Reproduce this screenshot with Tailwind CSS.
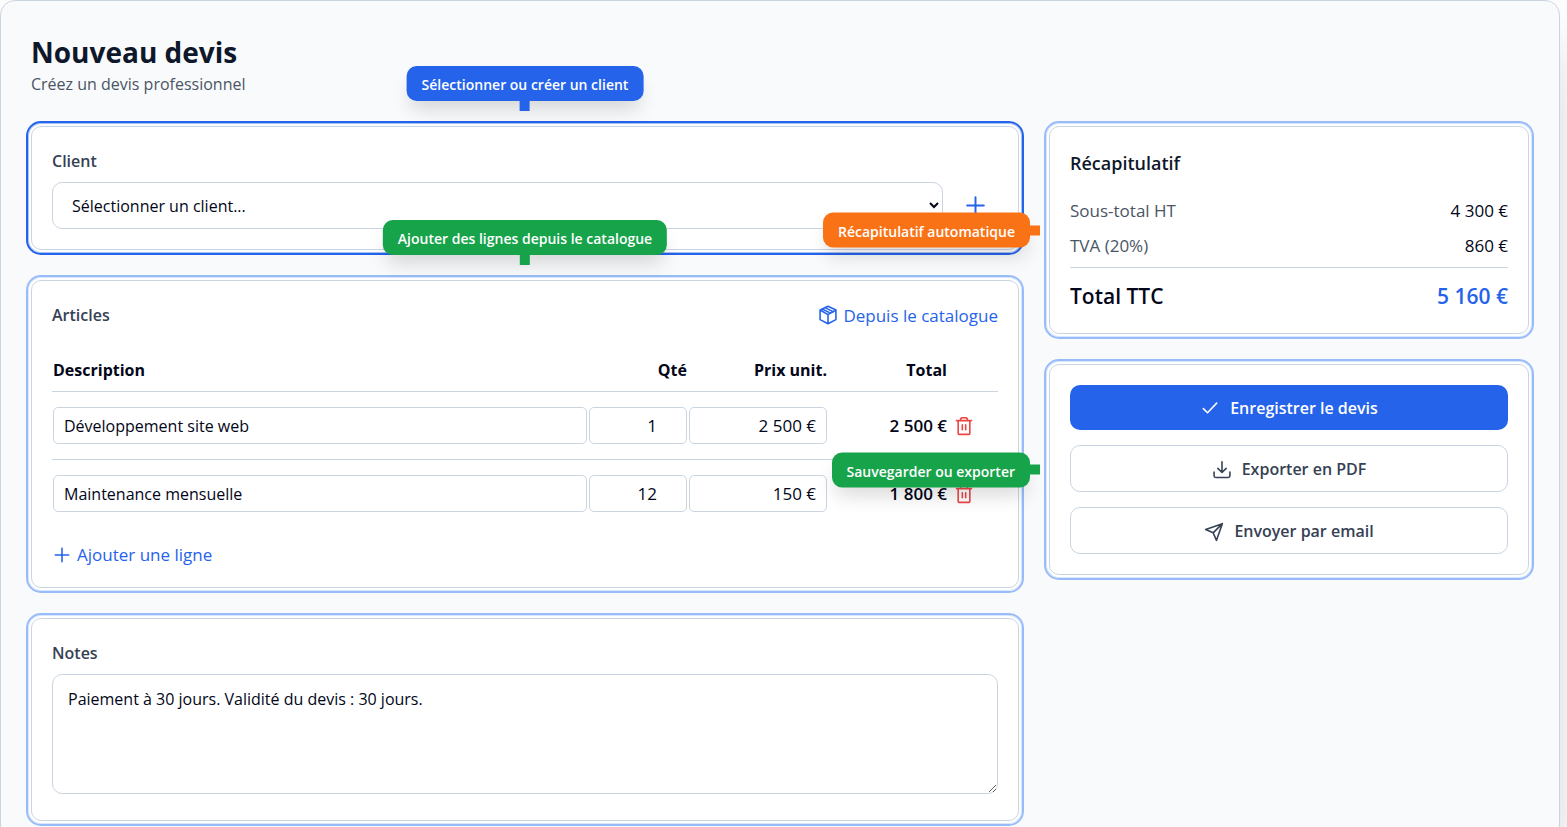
<!DOCTYPE html>
<html lang="fr">
<head>
  <meta charset="UTF-8" />
  <meta name="viewport" content="width=device-width, initial-scale=1.0" />
  <title>Nouveau devis</title>
  <script src="https://cdn.jsdelivr.net/npm/@tailwindcss/browser@4"></script>
</head>
<body class="bg-white overflow-x-hidden font-['Open_Sans',sans-serif] text-base leading-[25px] text-slate-950">
  <main class="mr-[7px] px-[25px] pt-[35px] pb-6 bg-[#f9fafc] border border-[#cbd5e1] rounded-[15px] shadow-[0_31px_62px_-15px_rgba(0,0,0,0.25)]">
    <!-- Header -->
    <header class="px-[5px] mb-6">
      <h1 class="text-[28px] leading-8 font-bold text-[#0f172a]">Nouveau devis</h1>
      <p class="mt-1 text-gray-600">Créez un devis professionnel</p>
    </header>

    <div class="grid grid-cols-[998fr_490fr] gap-5 items-start">
      <div class="flex flex-col gap-5">
        <!-- Client -->
        <section class="relative p-[3px] bg-white border-2 border-[#2563eb] rounded-[15px] shadow-[inset_0_0_0_1px_#a8c1f7]">
          <div class="p-5 border border-[#cbd5e1] rounded-[10px]">
            <label for="client" class="block mb-[7px] leading-7 font-semibold text-gray-700">Client</label>
            <div class="flex gap-[10px]">
              <select id="client" class="flex-1 h-[47px] px-[15px] bg-white border border-[#cbd5e1] rounded-[10px]">
                <option>Sélectionner un client...</option>
              </select>
              <button type="button" aria-label="Créer un client" class="p-[10px] text-[#2563eb]">
                <svg class="size-[25px]" viewBox="0 0 24 24" fill="none" stroke="currentColor" stroke-width="1.9" stroke-linecap="round" stroke-linejoin="round"><path d="M12 4v16M4 12h16" /></svg>
              </button>
            </div>
          </div>
          <div class="absolute z-10 bottom-full left-1/2 -translate-x-1/2 mb-[22px] px-[15px] pt-[6px] pb-1 bg-[#2563eb] text-white text-sm leading-[25px] font-semibold whitespace-nowrap rounded-[10px] shadow-[0_12px_19px_-4px_rgba(0,0,0,0.15)]">
            Sélectionner ou créer un client
            <span class="absolute top-full left-1/2 -translate-x-1/2 size-[10px] bg-[#2563eb]"></span>
          </div>
        </section>

        <!-- Articles -->
        <section class="relative p-[3px] bg-white border-2 border-[#98bcf9] rounded-[15px] shadow-[inset_0_0_0_1px_#d9e6fd]">
          <div class="p-5 border border-[#cbd5e1] rounded-[10px]">
            <div class="flex justify-between items-center mb-[19px]">
              <h2 class="leading-7 font-semibold text-gray-700">Articles</h2>
              <button type="button" class="flex items-center gap-[5px] text-[17px] text-[#2563eb]">
                <svg class="size-5" viewBox="0 0 24 24" fill="none" stroke="currentColor" stroke-width="1.9" stroke-linecap="round" stroke-linejoin="round"><path d="M12 1.5L21.5 6v11.500L12 22.500l-9.500-5V6zM2.500 6L12 11.500 21.500 6M12 11.500v11M5 4.800l10 5M8.500 3.200l10 5" /></svg>
                Depuis le catalogue
              </button>
            </div>
            <table class="w-full table-fixed border-collapse">
              <thead>
                <tr class="border-b border-[#cbd5e1] font-bold">
                  <th class="px-px pt-[10px] pb-2 text-left">Description</th>
                  <th class="w-[100px] px-px pt-[10px] pb-2 text-right">Qté</th>
                  <th class="w-[140px] px-px pt-[10px] pb-2 text-right">Prix unit.</th>
                  <th class="w-[120px] px-px pt-[10px] pb-2 text-right">Total</th>
                  <th class="w-[50px]"></th>
                </tr>
              </thead>
              <tbody>
                <tr class="border-b border-[#cbd5e1]">
                  <td class="px-px py-[15px]"><input type="text" aria-label="Description" value="Développement site web" class="block w-full h-[37px] px-[10px] border border-[#cbd5e1] rounded-[5px]" /></td>
                  <td class="px-px"><input type="number" aria-label="Quantité" value="1" class="block w-full h-[37px] px-[14px] text-[17px] text-right border border-[#cbd5e1] rounded-[5px]" /></td>
                  <td class="px-px"><input type="text" aria-label="Prix unitaire" value="2 500 €" class="block w-full h-[37px] px-[10px] text-[17px] text-right border border-[#cbd5e1] rounded-[5px]" /></td>
                  <td class="px-px text-[17px] text-right font-semibold">2 500 €</td>
                  <td class="px-px">
                    <button type="button" aria-label="Supprimer" class="block p-[5px] text-[#ef4444]">
                      <svg class="size-5" viewBox="0 0 24 24" fill="none" stroke="currentColor" stroke-width="1.9" stroke-linecap="round" stroke-linejoin="round"><path d="M3 5.5h18M19 5.5V21a1 1 0 0 1-1 1H6a1 1 0 0 1-1-1V5.500M8 5.500v-2L9.500 2h5L16 3.500v2M10 10.500v6M14 10.500v6" /></svg>
                    </button>
                  </td>
                </tr>
                <tr>
                  <td class="px-px py-[15px]"><input type="text" aria-label="Description" value="Maintenance mensuelle" class="block w-full h-[37px] px-[10px] border border-[#cbd5e1] rounded-[5px]" /></td>
                  <td class="px-px"><input type="number" aria-label="Quantité" value="12" class="block w-full h-[37px] px-[14px] text-[17px] text-right border border-[#cbd5e1] rounded-[5px]" /></td>
                  <td class="px-px"><input type="text" aria-label="Prix unitaire" value="150 €" class="block w-full h-[37px] px-[10px] text-[17px] text-right border border-[#cbd5e1] rounded-[5px]" /></td>
                  <td class="px-px text-[17px] text-right font-semibold">1 800 €</td>
                  <td class="px-px">
                    <button type="button" aria-label="Supprimer" class="block p-[5px] text-[#ef4444]">
                      <svg class="size-5" viewBox="0 0 24 24" fill="none" stroke="currentColor" stroke-width="1.9" stroke-linecap="round" stroke-linejoin="round"><path d="M3 5.5h18M19 5.5V21a1 1 0 0 1-1 1H6a1 1 0 0 1-1-1V5.500M8 5.500v-2L9.500 2h5L16 3.500v2M10 10.500v6M14 10.500v6" /></svg>
                    </button>
                  </td>
                </tr>
              </tbody>
            </table>
            <button type="button" class="flex items-center gap-[5px] mt-[15px] text-[17px] text-[#2563eb]">
              <svg class="size-5" viewBox="0 0 24 24" fill="none" stroke="currentColor" stroke-width="1.9" stroke-linecap="round" stroke-linejoin="round"><path d="M12 4v16M4 12h16" /></svg>
              Ajouter une ligne
            </button>
          </div>
          <div class="absolute z-10 bottom-full left-1/2 -translate-x-1/2 mb-[22px] px-[15px] pt-[6px] pb-1 bg-[#16a34a] text-white text-sm leading-[25px] font-semibold whitespace-nowrap rounded-[10px] shadow-[0_12px_19px_-4px_rgba(0,0,0,0.15)]">
            Ajouter des lignes depuis le catalogue
            <span class="absolute top-full left-1/2 -translate-x-1/2 size-[10px] bg-[#16a34a]"></span>
          </div>
        </section>

        <!-- Notes -->
        <section class="p-[3px] bg-white border-2 border-[#98bcf9] rounded-[15px] shadow-[inset_0_0_0_1px_#d9e6fd]">
          <div class="p-5 border border-[#cbd5e1] rounded-[10px]">
            <label for="notes" class="block mb-[7px] leading-7 font-semibold text-gray-700">Notes</label>
            <textarea id="notes" class="block w-full h-[120px] mb-1.5 px-[15px] py-3 border border-[#cbd5e1] rounded-[10px]">Paiement à 30 jours. Validité du devis : 30 jours.</textarea>
          </div>
        </section>
      </div>

      <div class="flex flex-col gap-5">
        <!-- Récapitulatif -->
        <section class="relative p-[3px] bg-white border-2 border-[#98bcf9] rounded-[15px] shadow-[inset_0_0_0_1px_#d9e6fd]">
          <div class="p-5 border border-[#cbd5e1] rounded-[10px]">
            <h2 class="mb-[19px] text-lg leading-8 font-semibold text-[#0f172a]">Récapitulatif</h2>
            <div class="flex justify-between mb-[10px] text-[17px]">
              <span class="text-gray-600">Sous-total HT</span>
              <span>4 300 €</span>
            </div>
            <div class="flex justify-between mb-[9px] text-[17px]">
              <span class="text-gray-600">TVA (20%)</span>
              <span>860 €</span>
            </div>
            <div class="flex justify-between pt-[11px] border-t border-[#cbd5e1] text-[21px] leading-[34px] font-semibold">
              <span>Total TTC</span>
              <span class="text-[#2563eb]">5 160 €</span>
            </div>
          </div>
          <div class="absolute z-10 right-full top-1/2 -translate-y-1/2 mr-4 px-[15px] pt-[6px] pb-1 bg-[#f97316] text-white text-sm leading-[25px] font-semibold whitespace-nowrap rounded-[10px] shadow-[0_12px_19px_-4px_rgba(0,0,0,0.15)]">
            Récapitulatif automatique
            <span class="absolute left-full top-1/2 -translate-y-1/2 size-[10px] bg-[#f97316]"></span>
          </div>
        </section>

        <!-- Actions -->
        <section class="relative p-[3px] bg-white border-2 border-[#98bcf9] rounded-[15px] shadow-[inset_0_0_0_1px_#d9e6fd]">
          <div class="flex flex-col gap-[15px] p-5 border border-[#cbd5e1] rounded-[10px] font-semibold">
            <button type="button" class="flex justify-center items-center gap-[10px] pt-[11px] pb-[9px] bg-[#2563eb] text-white rounded-[10px]">
              <svg class="size-5" viewBox="0 0 24 24" fill="none" stroke="currentColor" stroke-width="1.9" stroke-linecap="round" stroke-linejoin="round"><path d="M20 5L9 16.5l-5-5" /></svg>
              Enregistrer le devis
            </button>
            <button type="button" class="flex justify-center items-center gap-[10px] pt-[11px] pb-[9px] border border-[#cbd5e1] text-gray-700 rounded-[10px]">
              <svg class="size-5" viewBox="0 0 24 24" fill="none" stroke="currentColor" stroke-width="1.9" stroke-linecap="round" stroke-linejoin="round"><path d="M21.500 14.500V19a2 2 0 0 1-2 2h-15a2 2 0 0 1-2-2v-4.500M7 10l5 5 5-5M12 15V2" /></svg>
              Exporter en PDF
            </button>
            <button type="button" class="flex justify-center items-center gap-[10px] pt-[11px] pb-[9px] border border-[#cbd5e1] text-gray-700 rounded-[10px]">
              <svg class="size-5" viewBox="0 0 24 24" fill="none" stroke="currentColor" stroke-width="1.9" stroke-linecap="round" stroke-linejoin="round"><path d="M22 2L11 13M22 2l-7 20-4-9-9-4 20-7z" /></svg>
              Envoyer par email
            </button>
          </div>
          <div class="absolute z-10 right-full top-1/2 -translate-y-1/2 mr-4 px-[15px] pt-[6px] pb-1 bg-[#16a34a] text-white text-sm leading-[25px] font-semibold whitespace-nowrap rounded-[10px] shadow-[0_12px_19px_-4px_rgba(0,0,0,0.15)]">
            Sauvegarder ou exporter
            <span class="absolute left-full top-1/2 -translate-y-1/2 size-[10px] bg-[#16a34a]"></span>
          </div>
        </section>
      </div>
    </div>
  </main>
</body>
</html>
